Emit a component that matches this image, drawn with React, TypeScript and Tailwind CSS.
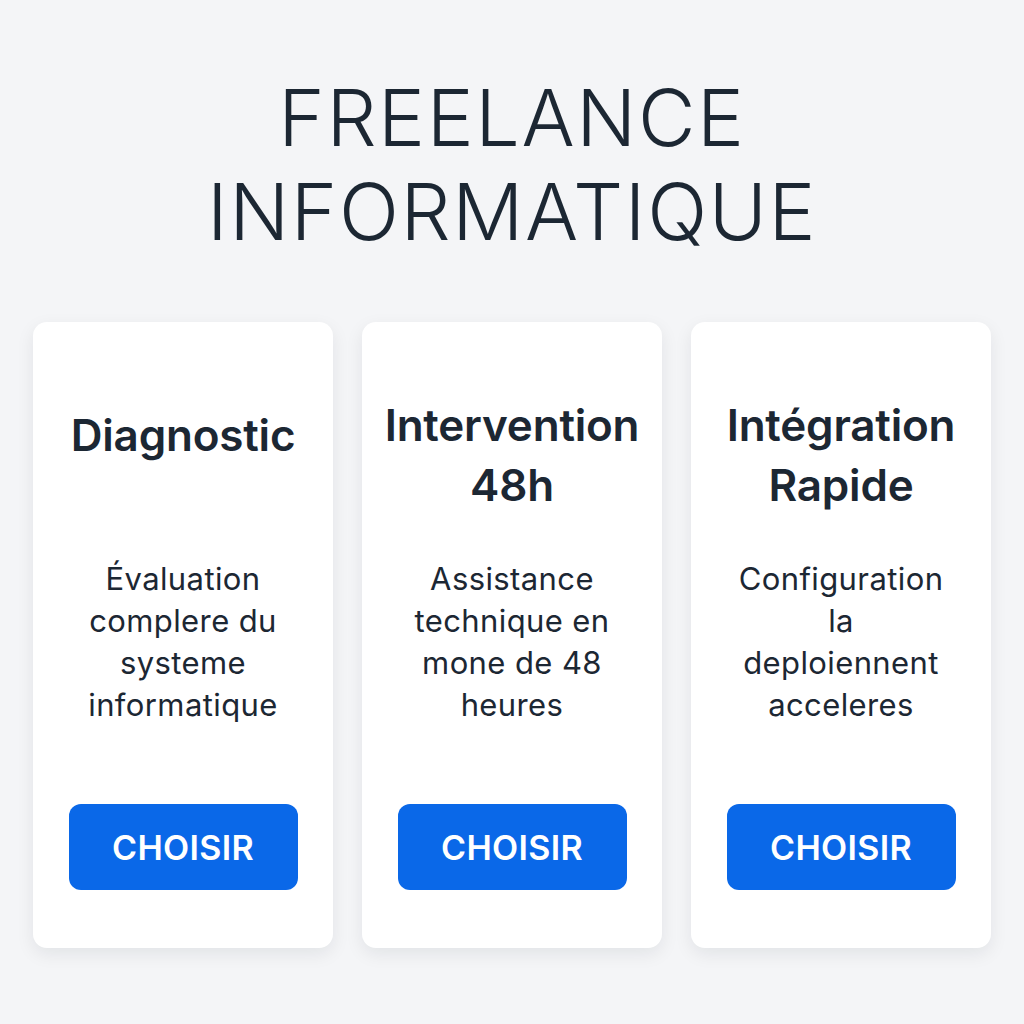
import React from "react";

type Offer = {
  title: string[];
  desc: string[];
  offset?: string;
};

const offers: Offer[] = [
  {
    title: ["Diagnostic"],
    desc: ["Évaluation", "complere du", "systeme", "informatique"],
    offset: "pt-[10px]",
  },
  {
    title: ["Intervention", "48h"],
    desc: ["Assistance", "technique en", "mone de 48", "heures"],
  },
  {
    title: ["Intégration", "Rapide"],
    desc: ["Configuration", "la", "deploiennent", "acceleres"],
  },
];

function OfferCard({ offer }: { offer: Offer }) {
  return (
    <div className="flex h-[626px] flex-col items-center rounded-[14px] bg-white px-4 pt-[73px] shadow-[0_6px_18px_rgba(15,23,42,0.08)]">
      {/* titre */}
      <div className={`h-[163px] text-center ${offer.offset ?? ""}`}>
        <h2 className="text-[44px] font-semibold leading-[60px] tracking-[-0.2px] text-[#1c2733]">
          {offer.title.map((line) => (
            <span key={line} className="block">
              {line}
            </span>
          ))}
        </h2>
      </div>
      {/* description */}
      <p className="text-center text-[31px] leading-[42px] tracking-[0.4px] text-[#1c2733]">
        {offer.desc.map((line, i) => (
          <span key={i} className="block">
            {line}
          </span>
        ))}
      </p>
      <button className="mt-auto mb-[58px] h-[86px] w-[229px] rounded-[12px] bg-[#0a68e8] text-[34px] font-semibold tracking-[0.3px] text-white">
        CHOISIR
      </button>
    </div>
  );
}

export default function App() {
  return (
    <div
      className="min-h-screen bg-[#f4f5f7] pt-[70px]"
      style={{ fontFamily: "Inter, 'Noto Sans', sans-serif" }}
    >
      <h1 className="text-center text-[79px] font-light leading-[94px] tracking-[1.6px] text-[#1c2733]">
        FREELANCE
        <br />
        INFORMATIQUE
      </h1>
      <div className="mx-[33px] mt-[64px] grid grid-cols-3 gap-[29px]">
        {offers.map((o) => (
          <OfferCard key={o.title[0]} offer={o} />
        ))}
      </div>
    </div>
  );
}
